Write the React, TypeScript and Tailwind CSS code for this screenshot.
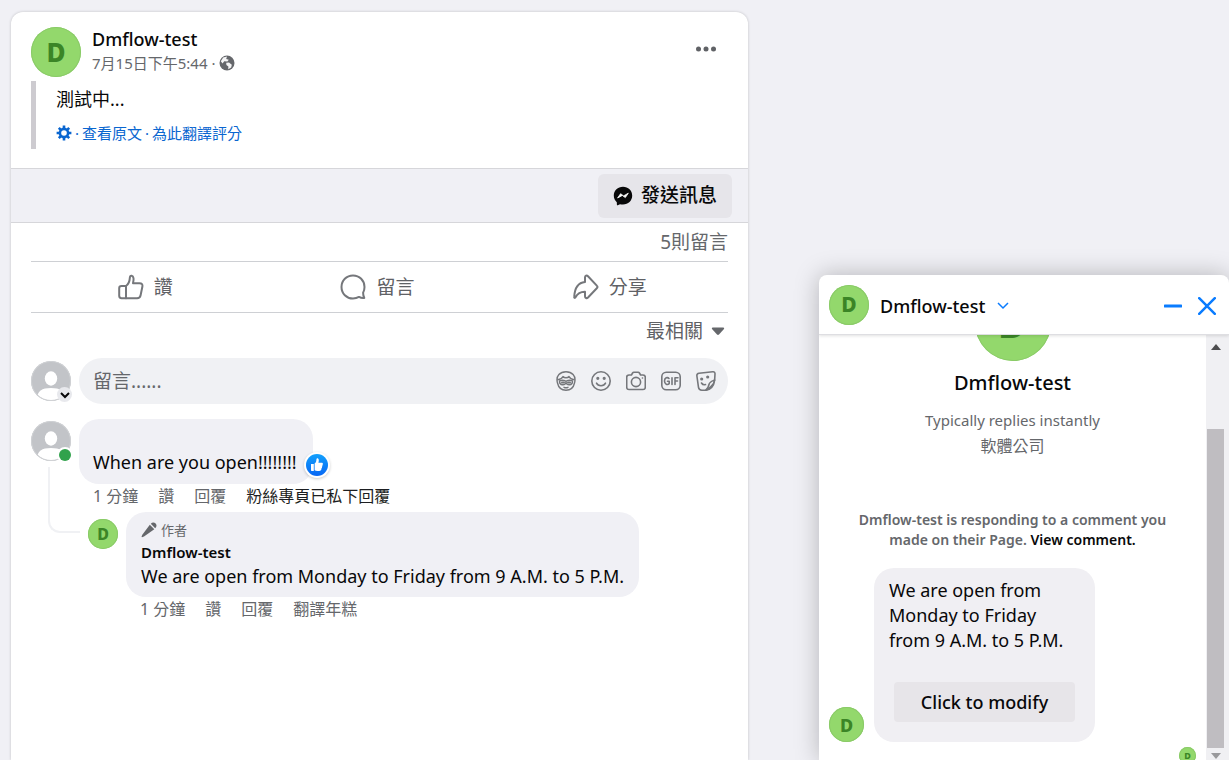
import type { ReactNode } from "react";

function Avatar({ className }: { className: string }) {
  return (
    <span
      aria-hidden="true"
      className={`flex shrink-0 items-center justify-center rounded-full bg-[#93d86c] font-extrabold leading-none text-[#3b8526] ring-1 ring-inset ring-[#8aca68] ${className}`}
    >
      D
    </span>
  );
}

function PersonAvatar({ children }: { children: ReactNode }) {
  return (
    <div className="relative size-10 shrink-0">
      <svg viewBox="0 0 40 40" className="size-10" aria-hidden="true">
        <defs>
          <clipPath id="person">
            <circle cx="20" cy="20" r="19.5" />
          </clipPath>
        </defs>
        <circle cx="20" cy="20" r="20" fill="#c2c4c8" />
        <g clipPath="url(#person)" fill="#fff">
          <ellipse cx="20" cy="17.5" rx="6.2" ry="7.2" />
          <path d="M6 38c0-8 5-11 14-11s14 3 14 11v4H6z" />
        </g>
        <circle cx="20" cy="20" r="19.5" fill="none" stroke="#cfd1d4" />
      </svg>
      {children}
    </div>
  );
}

const line = { fill: "none", stroke: "#75777b", strokeWidth: 1.6, strokeLinecap: "round", strokeLinejoin: "round" } as const;

function GlobeIcon() {
  return (
    <svg viewBox="0 0 16 16" className="size-4" aria-hidden="true">
      <circle cx="8" cy="8" r="7.5" fill="#65676b" />
      <path d="M4.2 2.4 8 1.5 7.2 4l2.6.8L8.4 6.6 5.2 6.2 3.6 8.4 1.8 6.2z" fill="#f4f4f5" />
      <path d="M7.2 7.8 10 7.6l2.8 2.2-.6 2.8-3 1.6.2-2.8L7.4 10z" fill="#f4f4f5" />
    </svg>
  );
}

function GearIcon() {
  return (
    <svg viewBox="0 0 16 16" className="size-4" aria-hidden="true">
      <g stroke="#0a66d0" strokeWidth="2.6">
        <path d="M8 .6v14.8M.6 8h14.8M2.8 2.8l10.4 10.4M13.2 2.8 2.8 13.2" />
      </g>
      <circle cx="8" cy="8" r="5.4" fill="#0a66d0" />
      <circle cx="8" cy="8" r="2.8" fill="#fff" />
    </svg>
  );
}

function MessengerIcon() {
  return (
    <svg viewBox="0 0 20 20" className="size-5" aria-hidden="true">
      <path d="M10 .8C4.8.8.8 4.5.8 9.6c0 2.7 1.100 5 3 6.600l.1 2.500c0 .5.500.8.9.6l2.200-1c1 .2 1.900.3 3 .3 5.200 0 9.200-3.800 9.200-9S15.200.8 10 .8z" fill="#080809" />
      <path d="m4.600 12 3-4.300 2.900 2.200 4.800-2.700-3 4.400-2.900-2.200z" fill="#fff" stroke="#fff" strokeWidth=".8" strokeLinejoin="round" />
    </svg>
  );
}

function LikeIcon() {
  return (
    <svg viewBox="0 0 26 26" className="size-[26px]" aria-hidden="true" {...line} strokeWidth={2}>
      <path d="M8 12c2.300-1.500 3.600-4 3.900-8.600C12 2.100 12.700 1.500 13.600 1.700c2.100.5 2.500 3.300 1.400 7.600h6.500c2.400 0 3.300 1.200 2.900 3.200l-1.800 8.700c-.4 2-1.500 3-3.500 3H8z" />
      <path d="M8 12H3.500c-1.500 0-2.300.7-2.300 2.200v7.600c0 1.600.8 2.400 2.300 2.400H8z" />
    </svg>
  );
}

function CommentIcon() {
  return (
    <svg viewBox="0 0 26 26" className="size-[26px]" aria-hidden="true" {...line} strokeWidth={2}>
      <path d="M13 1.500C6.500 1.500 1.500 6.500 1.500 13S6.500 24.500 13 24.500c2.300 0 4.300-.6 6-1.600 1.600.9 3.400 1.200 5.300 1-.8-1.600-1.200-3.300-1.200-5.200 1-1.700 1.400-3.600 1.400-5.700 0-6.500-5-11.500-11.500-11.500z" />
    </svg>
  );
}

function ShareIcon() {
  return (
    <svg viewBox="0 0 26 26" className="size-[26px]" aria-hidden="true" {...line} strokeWidth={2}>
      <path d="M12 8V3.500c0-1.800 1.700-2.500 3-1.300l8.800 9.400c.8.800.8 1.800 0 2.600L15 23.500c-1.300 1.200-3 .5-3-1.200v-4.500c-4.500-.1-7.300 1.400-9.500 5.500-.5.900-1.400.7-1.300-.4C1.700 14 5 8.600 12 8z" />
    </svg>
  );
}

function AvatarStickerIcon() {
  return (
    <svg viewBox="0 0 20 20" className="size-5" aria-hidden="true" {...line} strokeWidth={1.400}>
      <path d="M1.500 12C-.6 4.500 4.500.8 10 .8S20.600 4.500 18.500 12c-1 4.500-4.300 7.200-8.500 7.200S2.500 16.500 1.500 12z" />
      <path d="M1.800 8.800c2.700-.3 4.300-1.600 5.200-3.300 1.400 1.700 4.600 1.700 6 0 .9 1.700 2.500 3 5.200 3.300" />
      <path d="M3.500 10.500c0-1.700 5.600-1.700 6.500 0 .9-1.700 6.500-1.700 6.500 0 0 4.200-5.700 4.300-6.500.8-.8 3.500-6.500 3.400-6.500-.8z" />
      <path d="M6 11.500h2M12 11.500h2" strokeWidth="2" />
      <path d="M8 16.300c1.300.6 2.700.6 4 0" />
    </svg>
  );
}

function SmileIcon() {
  return (
    <svg viewBox="0 0 20 20" className="size-5" aria-hidden="true" {...line}>
      <circle cx="10" cy="10" r="9.200" />
      <path d="M5.500 12.200c1.600 3.300 7.400 3.300 9 0" />
      <circle cx="6.800" cy="7.300" r=".8" fill="#75777b" />
      <circle cx="13.200" cy="7.300" r=".8" fill="#75777b" />
    </svg>
  );
}

function CameraIcon() {
  return (
    <svg viewBox="0 0 20 20" className="size-5" aria-hidden="true" {...line}>
      <path d="M3 4h2.400l1.200-2c.3-.5.700-.7 1.200-.7h4.400c.5 0 .9.200 1.200.7l1.200 2H17c1.500 0 2.300.8 2.300 2.300v9.900c0 1.500-.8 2.300-2.300 2.300H3c-1.500 0-2.300-.8-2.300-2.300V6.300C.7 4.800 1.500 4 3 4z" />
      <circle cx="10" cy="11" r="4.600" />
      <path d="M16.400 7h.1" />
    </svg>
  );
}

function GifIcon() {
  return (
    <svg viewBox="0 0 20 20" className="size-5" aria-hidden="true" {...line}>
      <rect x=".8" y="1.300" width="18.400" height="17.400" rx="4.500" />
      <path d="M8 7.500C6.500 5.700 3.500 6.700 3.500 10s3 4.300 4.700 2.600V10.300H6.500M11 6.800v6.600M14 13.400V6.800h3M14 10h2.500" />
    </svg>
  );
}

function StickerIcon() {
  return (
    <svg viewBox="0 0 20 20" className="size-5" aria-hidden="true" {...line}>
      <path d="M3 2.200 16.700.8c1.600-.1 2.400.7 2.300 2.200l-.4 6.500c-.2 3-5.300 8.800-8.800 9.700H5.800c-2.300 0-3-.8-3.300-2.800L.9 5c-.2-1.700.4-2.600 2.100-2.800z" />
      <path d="M18.600 9c-3.500 1.500-5.200 2-5.600 4.500-.3 2-1.200 4-3.200 5.700 4.500 0 8.200-3.700 8.800-10.200z" />
      <path d="M5.500 12c.9 1.500 2.200 2.100 4 1.600" />
      <circle cx="5.700" cy="8" r=".8" fill="#75777b" />
      <circle cx="11.700" cy="6" r=".8" fill="#75777b" />
    </svg>
  );
}

function MicIcon() {
  return (
    <svg viewBox="0 0 16 16" className="size-4" aria-hidden="true">
      <path d="M8.800 2.700 13.300 7.200 3 14.500l-2 .800-.5-.5.800-2z" fill="#65676b" />
      <path d="M9.800 1.800c1.500-1.700 3.500-1.500 4.800-.3 1.200 1.300 1.300 3.300-.4 4.700z" fill="#65676b" />
    </svg>
  );
}

function ReactionBadge() {
  return (
    <span className="absolute -right-[17px] bottom-1.5 flex size-[26px] items-center justify-center rounded-full bg-white shadow-[0_1px_3px_rgba(0,0,0,0.2)]">
      <svg viewBox="0 0 22 22" className="size-[22px]" aria-label="讚" role="img">
        <defs>
          <linearGradient id="blue" x2="0" y2="1">
            <stop stopColor="#12a0fc" />
            <stop offset="1" stopColor="#0867f4" />
          </linearGradient>
        </defs>
        <circle cx="11" cy="11" r="11" fill="url(#blue)" />
        <path d="M5 10h2.800v7H5.700c-.5 0-.7-.3-.7-.7zM8.600 9.600c1.500-1.200 1.700-2.500 1.800-4.200.1-1.100 1-1.400 1.700-.9 1 .8.800 2.600.3 4.300h3.200c1 0 1.500.7 1.300 1.400-.1.500-.4.800-.6.900.3.400.3 1-.3 1.600.2.700 0 1.200-.5 1.600 0 1.700-.8 2.700-2.400 2.700h-1.700c-1.200 0-2-.3-2.800-.8z" fill="#fff" />
      </svg>
    </span>
  );
}

function ActionButton({ icon, label }: { icon: ReactNode; label: string }) {
  return (
    <button type="button" className="flex flex-1 items-center justify-center gap-2.5 pr-1 text-[19px] text-[#5f6165]">
      {icon}
      {label}
    </button>
  );
}

function CommentLinks({ last, strong = false }: { last: string; strong?: boolean }) {
  return (
    <div className="mb-1 flex h-6 items-center gap-5 pl-3.5 text-base text-[#65676b]">
      <span>1 分鐘</span>
      <button type="button">讚</button>
      <button type="button">回覆</button>
      {strong ? <span className="text-[#1c1e21]">{last}</span> : <button type="button">{last}</button>}
    </div>
  );
}

const composerIcons = [
  { label: "虛擬替身貼圖", icon: <AvatarStickerIcon /> },
  { label: "表情符號", icon: <SmileIcon /> },
  { label: "相機", icon: <CameraIcon /> },
  { label: "GIF", icon: <GifIcon /> },
  { label: "貼圖", icon: <StickerIcon /> },
];

function Post() {
  return (
    <article className="mt-3 min-w-0 flex-1 rounded-t-xl bg-white shadow-[0_0_3px_rgba(0,0,0,0.2)]">
      <header className="flex px-5 pt-[15px]">
        <Avatar className="size-[50px] text-[26px]" />
        <div className="ml-[11px] flex-1">
          <h1 className="text-lg font-medium leading-6">Dmflow-test</h1>
          <p className="flex items-center gap-1 text-[15px] leading-6 text-[#65676b]">
            7月15日下午5:44 · <GlobeIcon />
          </p>
        </div>
        <button type="button" aria-label="更多" className="mr-3 flex h-11 items-center">
          <svg viewBox="0 0 20 6" className="h-1.5 w-5" fill="#606266" aria-hidden="true">
            <circle cx="2.500" cy="3" r="2.500" />
            <circle cx="10" cy="3" r="2.500" />
            <circle cx="17.500" cy="3" r="2.500" />
          </svg>
        </button>
      </header>

      <div className="mx-5 mb-[19px] mt-1 h-[68px] border-l-[5px] border-[#cdcbd0] pl-5">
        <p className="pt-1 text-lg leading-7">測試中...</p>
        <p className="mt-2 flex items-center gap-[3px] text-[15px] leading-6 text-[#0a66d0]">
          <GearIcon />
          <span>·</span>
          <a href="#original">查看原文</a>
          <span>·</span>
          <a href="#rate">為此翻譯評分</a>
        </p>
      </div>

      <div className="flex h-[55px] items-center justify-end border-y border-[#d6d6da] bg-[#f0f0f5] px-4">
        <button type="button" className="flex h-11 items-center gap-2 rounded-md bg-[#e6e5ea] px-[15px] text-[19px] font-medium">
          <MessengerIcon />
          發送訊息
        </button>
      </div>

      <div className="px-5">
        <p className="h-[38px] text-right text-[19px] leading-[38px] text-[#65676b]">5則留言</p>
        <div className="flex h-[52px] border-y border-[#ced0d4]">
          <ActionButton icon={<LikeIcon />} label="讚" />
          <ActionButton icon={<CommentIcon />} label="留言" />
          <ActionButton icon={<ShareIcon />} label="分享" />
        </div>
        <div className="flex h-[45px] justify-end">
          <button type="button" className="flex h-9 items-center gap-2 pr-[3px] text-[19px] text-[#5f6165]">
            最相關
            <svg viewBox="0 0 14 8" className="h-2 w-3.5" aria-hidden="true">
              <path d="M1.500.5h11q1 .5.500 1.500L8 7.500q-1 .8-2 0L1 2Q.5 1 1.500.5z" fill="#65676b" />
            </svg>
          </button>
        </div>

        <div className="flex gap-2">
          <div className="pt-[3px]">
            <PersonAvatar>
              <span className="absolute -bottom-px -right-px flex size-[15px] items-center justify-center rounded-full bg-[#e8e9ed]">
                <svg viewBox="0 0 12 12" className="size-3" aria-hidden="true">
                  <path d="m2 4 4 4 4-4" fill="none" stroke="#080809" strokeWidth="2" />
                </svg>
              </span>
            </PersonAvatar>
          </div>
          <div className="flex h-[46px] flex-1 items-center rounded-full bg-[#f0f1f4] pl-3.5 pr-3">
            <input
              type="text"
              aria-label="留言"
              placeholder="留言......"
              className="h-full min-w-0 flex-1 bg-transparent text-[19px] outline-none placeholder:text-[#65676b]"
            />
            <div className="flex gap-[15px]">
              {composerIcons.map(({ label, icon }) => (
                <button type="button" key={label} aria-label={label}>
                  {icon}
                </button>
              ))}
            </div>
          </div>
        </div>

        <div className="mt-[15px] flex gap-2">
          <div className="flex w-10 shrink-0 flex-col pt-0.5">
            <PersonAvatar>
              <span className="absolute bottom-0 right-0 size-3 rounded-full bg-[#31a24c] ring-2 ring-white" />
            </PersonAvatar>
            <div className="ml-[17px] mt-1.5 h-[66px] w-8 rounded-bl-xl border-b-2 border-l-2 border-[#f0f1f4]" />
          </div>
          <div className="min-w-0 flex-1">
            <div className="relative flex h-[65px] w-fit items-end rounded-[20px] bg-[#f0f0f5] pb-2 pl-3.5 pr-4">
              <p className="text-lg leading-7">When are you open!!!!!!!!</p>
              <ReactionBadge />
            </div>
            <CommentLinks last="粉絲專頁已私下回覆" strong />
            <div className="ml-[9px] flex gap-2">
              <Avatar className="mt-[7px] size-[30px] text-base" />
              <div>
                <div className="w-fit rounded-[20px] bg-[#f0f0f5] px-[15px] pb-[9px] pt-2">
                  <p className="flex items-center gap-1 text-[13px] leading-5 text-[#65676b]">
                    <MicIcon />
                    作者
                  </p>
                  <h2 className="text-[15px] font-semibold leading-6">Dmflow-test</h2>
                  <p className="text-lg leading-6">We are open from Monday to Friday from 9 A.M. to 5 P.M.</p>
                </div>
                <CommentLinks last="翻譯年糕" />
              </div>
            </div>
          </div>
        </div>
      </div>
    </article>
  );
}

function Chat() {
  return (
    <section
      aria-label="Dmflow-test"
      className="flex h-[485px] w-[410px] shrink-0 flex-col self-end overflow-hidden rounded-t-lg bg-white shadow-[0_0_24px_rgba(0,0,0,0.25)]"
    >
      <header className="z-10 flex h-[60px] shrink-0 items-center border-b border-[#dedee2] pl-2.5 pr-[13px] shadow-[0_1px_3px_rgba(0,0,0,0.12)]">
        <Avatar className="size-10 text-[21px]" />
        <button type="button" className="ml-[11px] flex items-center gap-3 pt-[3px] text-lg font-medium">
          Dmflow-test
          <svg viewBox="0 0 12 8" className="h-2 w-3" aria-hidden="true">
            <path d="m1 1 5 5 5-5" fill="none" stroke="#0a7cff" strokeWidth="1.500" />
          </svg>
        </button>
        <div className="ml-auto flex items-center gap-4 pt-0.5">
          <button type="button" aria-label="最小化">
            <svg viewBox="0 0 18 18" className="size-[18px]" aria-hidden="true">
              <path d="M1 9h16" stroke="#0a7cff" strokeWidth="3" strokeLinecap="round" />
            </svg>
          </button>
          <button type="button" aria-label="關閉">
            <svg viewBox="0 0 18 18" className="size-[18px]" aria-hidden="true">
              <path d="m1.200 1.200 15.600 15.600M16.800 1.200 1.200 16.800" stroke="#0a7cff" strokeWidth="2.500" strokeLinecap="round" />
            </svg>
          </button>
        </div>
      </header>

      <div className="flex min-h-0 flex-1">
        <div className="flex flex-1 flex-col overflow-hidden">
          <div className="-mt-[50px] flex flex-col items-center">
            <Avatar className="size-[76px] text-[40px]" />
            <h2 className="mt-2 text-xl font-medium leading-7">Dmflow-test</h2>
            <p className="mt-2.5 text-[15px] leading-[26px] text-[#65676b]">Typically replies instantly</p>
            <p className="text-base leading-[26px] text-[#65676b]">軟體公司</p>
          </div>
          <p className="mt-[51px] px-9 text-center text-sm font-semibold leading-5 text-[#65676b]">
            Dmflow-test is responding to a comment you made on their Page.{" "}
            <a href="#comment" className="text-[#080809]">
              View comment.
            </a>
          </p>
          <div className="mt-[18px] flex items-end gap-2.5 pl-2.5">
            <Avatar className="size-[35px] text-lg" />
            <div className="w-[221px] rounded-[20px] bg-[#f0eff3] px-[15px] pb-5 pt-2.5">
              <p className="text-lg leading-[25px]">
                We are open from
                <br />
                Monday to Friday
                <br />
                from 9 A.M. to 5 P.M.
              </p>
              <button
                type="button"
                className="ml-[5px] mt-[29px] h-10 w-[181px] rounded bg-[#e7e5e9] text-lg font-medium"
              >
                Click to modify
              </button>
            </div>
          </div>
          <Avatar className="mr-2.5 mt-[5px] size-[17px] self-end text-[9px]" />
        </div>

        <div className="flex w-[23px] flex-col items-center bg-[#f0f0f3] pr-1" aria-hidden="true">
          <svg viewBox="0 0 10 6" className="mt-[9px] h-1.5 w-2.5 shrink-0">
            <path d="m5 0 5 6H0z" fill="#4c4c4e" />
          </svg>
          <div className="mt-[79px] w-[17px] flex-1 bg-[#bfbdc1]" />
          <svg viewBox="0 0 10 6" className="mb-px mt-[5px] h-1.5 w-2.5 shrink-0">
            <path d="m0 0h10L5 6z" fill="#99999c" />
          </svg>
        </div>
      </div>
    </section>
  );
}

export default function App() {
  return (
    <main className="flex h-screen gap-[71px] overflow-hidden bg-[#f0f0f5] pl-[11px] font-['Noto_Sans','Noto_Sans_CJK_TC',sans-serif] text-[#080809]">
      <Post />
      <Chat />
    </main>
  );
}
